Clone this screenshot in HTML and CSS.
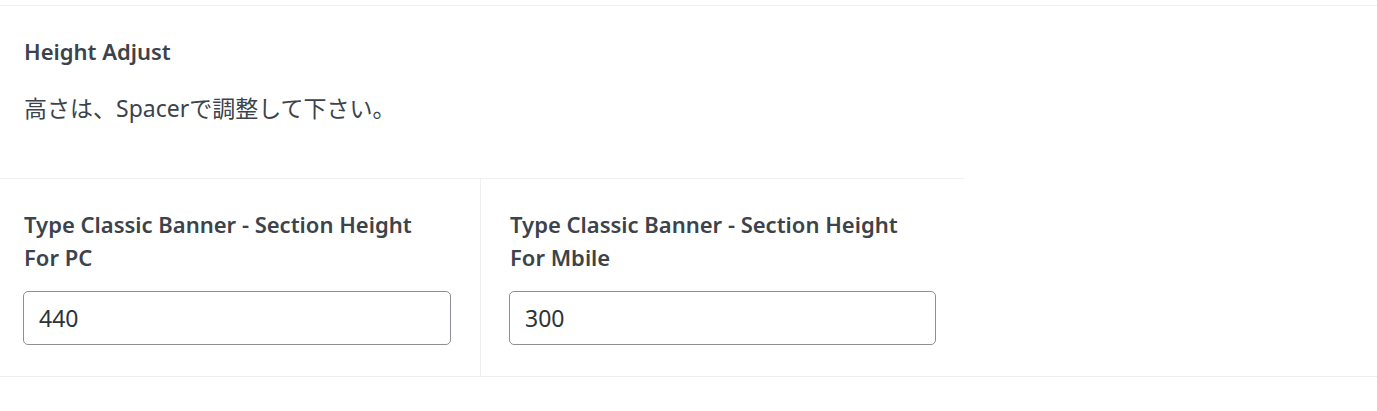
FILE: index.html
```html
<!DOCTYPE html>
<html lang="ja">
<head>
<meta charset="utf-8">
<title>Height Adjust</title>
<link rel="stylesheet" href="styles.css">
</head>
<body>
<div class="panel">
  <div class="intro">
    <h2 class="intro-title">Height Adjust</h2>
    <p class="intro-text">高さは、Spacerで調整して下さい。</p>
  </div>
  <div class="fields">
    <div class="field field-first">
      <label class="field-label" for="h-pc">Type Classic Banner - Section Height For PC</label>
      <input class="field-input" id="h-pc" type="text" value="440">
    </div>
    <div class="field field-second">
      <label class="field-label" for="h-sp">Type Classic Banner - Section Height For Mbile</label>
      <input class="field-input" id="h-sp" type="text" value="300">
    </div>
  </div>
</div>
</body>
</html>
```
FILE: styles.css
```css
html, body {
  margin: 0;
  padding: 0;
  background: #ffffff;
}
body {
  color: #3c434a;
  font-family: "Noto Sans", "Noto Sans CJK JP", sans-serif;
  font-size: 22px;
}
.panel {
  margin-top: 5px;
  border-top: 1px solid #efefef;
  border-bottom: 1px solid #efefef;
}
.intro {
  width: 964px;
  box-sizing: border-box;
  padding: 30px 24px 55px 24px;
}
.intro-title {
  margin: 0;
  font-size: 22px;
  font-weight: 600;
  line-height: 30px;
}
.intro-text {
  margin: 27px 0 0 0;
  font-size: 23px;
  line-height: 30px;
}
.fields {
  width: 964px;
  display: grid;
  grid-template-columns: 481px 1fr;
  border-top: 1px solid #efefef;
}
.field {
  display: flex;
  flex-direction: column;
  align-items: flex-start;
  padding-top: 29px;
  padding-bottom: 31px;
}
.field-first {
  padding-left: 23px;
  border-right: 1px solid #efefef;
}
.field-second {
  padding-left: 28px;
}
.field-label {
  display: block;
  max-width: 405px;
  padding-left: 1px;
  font-size: 22px;
  font-weight: 600;
  line-height: 33px;
  margin-bottom: 17px;
}
.field-input {
  box-sizing: border-box;
  width: 428px;
  height: 54px;
  margin: 0;
  padding: 0 15px;
  border: 1px solid #8c8f94;
  border-radius: 5px;
  background: #ffffff;
  color: #2c3338;
  font-family: "Noto Sans", sans-serif;
  font-size: 23px;
  outline: none;
}
.field-second .field-input {
  width: 427px;
}
```
